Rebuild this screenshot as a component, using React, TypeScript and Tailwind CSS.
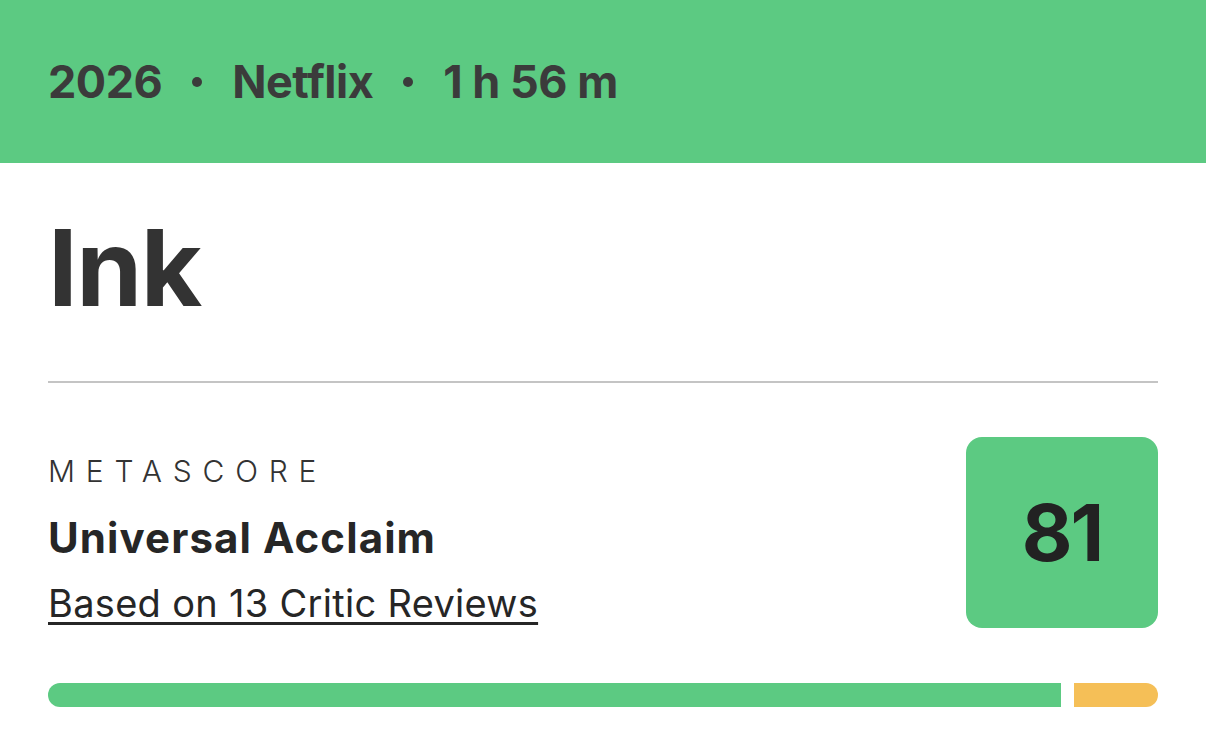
import React from 'react';

const font = { fontFamily: 'Inter, "Liberation Sans", sans-serif' };

function Meta() {
  const parts = ['2026', 'Netflix', '1 h 56 m'];
  return (
    <div className="h-[163px] bg-[#5cca82] px-12 flex items-center">
      <div className="flex items-center text-[45px] font-bold text-[#3b3b3b] tracking-[-0.5px]">
        {parts.map((p, i) => (
          <React.Fragment key={p}>
            {i > 0 && <span className="mx-[30px] w-[10px] h-[10px] rounded-full bg-[#3b3b3b]" />}
            <span>{p}</span>
          </React.Fragment>
        ))}
      </div>
    </div>
  );
}

export default function App() {
  return (
    <div className="w-[1206px] h-[730px] bg-white overflow-hidden" style={font}>
      <Meta />
      <div className="px-12">
        <h1 className="pt-[52px] text-[106px] font-bold leading-none text-[#333333] tracking-[-1.5px]">Ink</h1>
        <div className="mt-[60px] h-[2px] bg-[#c4c4c4]" />

        <div className="mt-[54px] flex justify-between items-start">
          <div className="pt-[19px]">
            <div className="text-[30px] font-light tracking-[0.36em] text-[#333] leading-none">METASCORE</div>
            <div className="mt-[31px] text-[42px] font-bold text-[#262626] leading-none tracking-[1.1px]">Universal Acclaim</div>
            <a href="#" className="block mt-[25px] text-[38px] text-[#262626] leading-none tracking-[0.3px] underline underline-offset-[5px] decoration-[3px]">
              Based on 13 Critic Reviews
            </a>
          </div>
          <div className="w-[192px] h-[191px] rounded-[16px] bg-[#5cca82] flex items-center justify-center">
            <span className="text-[78px] font-bold text-[#222] tracking-[-2px]">81</span>
          </div>
        </div>

        <div className="mt-[55px] flex h-[24px] gap-[13px]">
          <div className="w-[1013px] bg-[#5cca82] rounded-l-full" />
          <div className="flex-1 bg-[#f5bf57] rounded-r-full" />
        </div>
      </div>
    </div>
  );
}
